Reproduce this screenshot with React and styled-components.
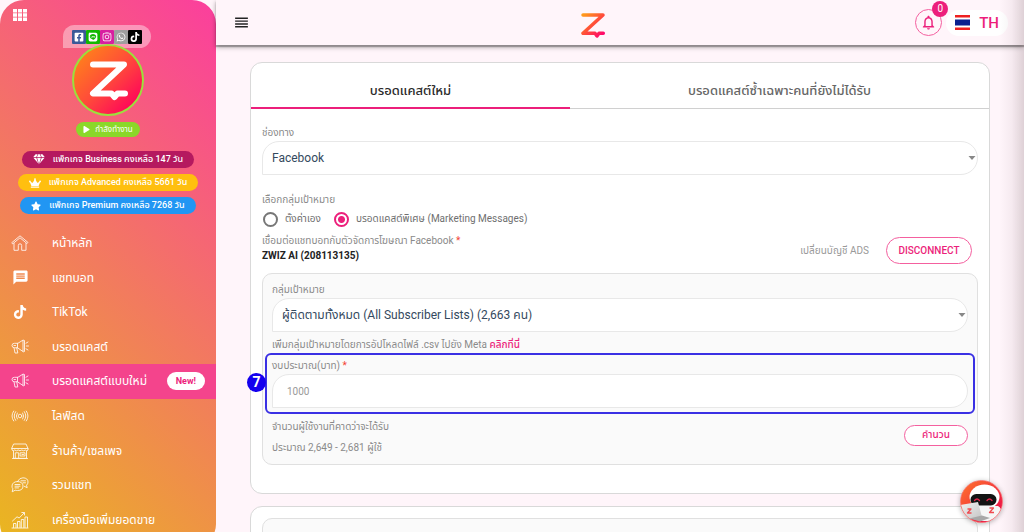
import React from "react";
import styled, { createGlobalStyle, css } from "styled-components";
import { FaFacebookSquare, FaLine, FaInstagram, FaWhatsapp, FaTiktok, FaCrown, FaPlay, FaStar } from "react-icons/fa";
import { MdMessage, MdReorder, MdNotificationsNone } from "react-icons/md";

const PINK = "#ec1f7b";

const GlobalStyle = createGlobalStyle`
  *, *::before, *::after { box-sizing: border-box; }
  body {
    margin: 0;
    background: #fff5fa;
    color: #8a8a8a;
    font-family: Roboto, "Noto Sans Thai", "Noto Sans", sans-serif;
    font-size: 10px;
    line-height: 16px;
  }
  button, input, select { font: inherit; margin: 0; }
  button { cursor: pointer; padding: 0; border: 0; background: none; }
  svg { display: block; flex: none; }
`;

const Shell = styled.div`
  display: flex;
  align-items: flex-start;
  height: 100vh;
  overflow: hidden;
`;

/* ---------- sidebar ---------- */
const Sidebar = styled.aside`
  flex: 0 0 216px;
  min-height: calc(100vh + 16px);
  padding-top: 9px;
  border-radius: 24px;
  color: #fff;
  background: linear-gradient(45deg, #e9b81e, #fb3e9e);
`;

const AppsButton = styled.button`
  display: block;
  margin-left: 13px;
  color: #fff;
`;

const Profile = styled.div`
  display: flex;
  flex-direction: column;
  align-items: center;
  padding-top: 4px;
`;

const Socials = styled.div`
  display: flex;
  margin-right: 2px;
  padding: 5px 9px 4px;
  border-radius: 12px 12px 12px 0;
  background: rgba(255, 255, 255, 0.4);
`;

const Social = styled.a`
  display: grid;
  place-items: center;
  width: 14px;
  height: 14px;
  border-radius: 1px;
  color: #fff;
  font-size: 10px;
  background: ${(p) => p.$color};
`;

const Avatar = styled.div`
  width: 72px;
  height: 72px;
  margin-top: -4px;
  border: 2px solid #9be03c;
  border-radius: 50%;
  overflow: hidden;
  background: linear-gradient(135deg, #ff7a1f 15%, #ff4b3a 50%, #ff0a58 85%);
`;

const Status = styled.button`
  display: flex;
  align-items: center;
  gap: 5px;
  height: 15px;
  margin-top: 6px;
  padding: 0 7px;
  border-radius: 8px;
  background: #8bd829;
  color: #fff;
  font-size: 8px;
  line-height: 15px;
`;

const Packages = styled.div`
  display: flex;
  flex-direction: column;
  align-items: center;
  gap: 6px;
  margin-top: 14px;
`;

const Package = styled.div`
  display: flex;
  align-items: center;
  gap: 8px;
  height: 17px;
  padding: 0 11px;
  border-radius: 9px;
  background: ${(p) => p.$color};
  font-size: 9px;
  font-weight: 500;
  line-height: 17px;
  white-space: nowrap;
`;

const Nav = styled.nav`
  display: grid;
  grid-auto-rows: 1fr;
  min-height: 311px;
  margin-top: 12px;
`;

const NavLink = styled.a`
  display: flex;
  align-items: center;
  padding: 0 11px;
  color: #fff;
  font-size: 12px;
  line-height: 20px;
  text-decoration: none;
  white-space: nowrap;
  ${(p) => p.$active && css`background: #f4448c;`}
`;

const NavIcon = styled.span`
  display: grid;
  place-items: center;
  width: 18px;
  margin-right: 23px;
`;

const NewTag = styled.span`
  margin-left: auto;
  padding: 0 9px;
  border-radius: 9px;
  background: #fff;
  color: ${PINK};
  font-size: 9px;
  font-weight: 700;
  line-height: 18px;
`;

/* ---------- header ---------- */
const Main = styled.div`
  flex: 1;
  min-width: 0;
`;

const Header = styled.header`
  position: relative;
  display: flex;
  align-items: center;
  justify-content: space-between;
  height: 45px;
  padding: 0 16px 0 17px;
  background: #fff5fa;
  box-shadow: 0 2px 1px rgba(0, 0, 0, 0.25), 0 2px 5px rgba(0, 0, 0, 0.35);
`;

const MenuButton = styled.button`
  width: 38px;
  color: #222;
`;

const HeaderTools = styled.div`
  display: flex;
  align-items: center;
  gap: 4px;
`;

const Bell = styled.button`
  position: relative;
  display: grid;
  place-items: center;
  width: 27px;
  height: 27px;
  border: 1px solid #f4609f;
  border-radius: 50%;
  color: ${PINK};
`;

const Badge = styled.span`
  position: absolute;
  top: -9px;
  right: -7px;
  width: 16px;
  height: 16px;
  border-radius: 50%;
  background: ${PINK};
  color: #fff;
  line-height: 16px;
`;

const Language = styled.button`
  display: flex;
  align-items: center;
  gap: 9px;
  height: 26px;
  padding: 0 9px;
  border-radius: 13px;
  background: #fff;
  color: ${PINK};
  font-size: 15px;
  font-weight: 500;
`;

/* ---------- content ---------- */
const Content = styled.main`
  display: grid;
  gap: 12px;
  padding: 17px 34px 17px;
`;

const Card = styled.section`
  border: 1px solid #d9d9d9;
  border-radius: 12px;
  background: #fff;
`;

const Tabs = styled.div`
  display: grid;
  grid-template-columns: 319px 1fr;
  height: 46px;
  border-bottom: 1px solid #d0d0d0;
`;

const Tab = styled.button`
  padding-top: 11px;
  margin-bottom: -1px;
  color: ${(p) => (p.$active ? "#2b2b2b" : "#666")};
  font-size: 13px;
  font-weight: 500;
  border-bottom: 2px solid ${(p) => (p.$active ? PINK : "transparent")};
`;

const CardBody = styled.div`
  padding: ${(p) => (p.$compact ? "11px" : "16px 11px 28px")};
`;

const Label = styled.label`
  display: block;
  height: 16px;
  white-space: nowrap;
`;

const Required = styled.span`
  color: #f44336;
`;

const SelectBox = styled.span`
  display: grid;
  align-items: center;
  & > * { grid-area: 1 / 1; }
  & > svg { justify-self: end; margin-right: 2px; pointer-events: none; }
`;

const fieldStyle = css`
  display: block;
  width: 100%;
  height: 34px;
  border: 1px solid #e8e8e8;
  border-radius: 17px 17px 17px 0;
  outline: 0;
  background: #fff;
  font-size: 12px;
`;

const Select = styled.select`
  ${fieldStyle}
  appearance: none;
  padding: 0 24px 0 9px;
  color: #34495e;
`;

const Input = styled.input`
  ${fieldStyle}
  padding: 0 14px;
  font-size: 10px;
  &::placeholder { color: #999; }
`;

const Group = styled.fieldset`
  min-width: 0;
  margin: 17px 0 0;
  padding: 0;
  border: 0;
  & > legend { padding: 0; }
`;

const Radios = styled.div`
  display: flex;
  gap: 12px;
  margin-top: 3px;
`;

const RadioLabel = styled.label`
  display: flex;
  align-items: center;
  gap: 6px;
  color: #6f6f6f;
  white-space: nowrap;
`;

const Radio = styled.input`
  appearance: none;
  width: 15px;
  height: 15px;
  margin: 0 1px;
  border: 2px solid #777;
  border-radius: 50%;
  &:checked {
    border-color: ${PINK};
    background: radial-gradient(circle, ${PINK} 3px, transparent 4px);
  }
`;

const Account = styled.div`
  display: flex;
  align-items: center;
  justify-content: space-between;
  margin: 5px 0 9px;
  padding-right: 6px;
`;

const AccountName = styled.div`
  color: #222;
  font-weight: 700;
  line-height: 14px;
`;

const Actions = styled.div`
  display: flex;
  align-items: center;
  gap: 17px;
  padding-top: 5px;
`;

const PlainButton = styled.button`
  color: #999;
`;

const OutlineButton = styled.button`
  height: ${(p) => (p.$small ? "21px" : "27px")};
  min-width: ${(p) => (p.$small ? "64px" : "86px")};
  border: 1px solid #f4609f;
  border-radius: 14px;
  color: ${PINK};
  background: #fff;
  font-weight: 500;
`;

const Panel = styled.div`
  padding: 8px 9px;
  border: 1px solid #e0e0e0;
  border-radius: 10px;
  background: #fafafa;
`;

const Hint = styled.p`
  margin: 5px 0 0;
  white-space: nowrap;
  & a { color: ${PINK}; font-weight: 500; text-decoration: none; }
`;

const Highlight = styled.div`
  position: relative;
  margin: 0 -7px;
  padding: 3px 5px 4px;
  border: 2px solid #3a30e4;
  border-radius: 6px;
`;

const Step = styled.span`
  position: absolute;
  left: -20px;
  top: 18px;
  width: 19px;
  height: 19px;
  border-radius: 50%;
  background: #1400ee;
  color: #fff;
  font-size: 14px;
  font-weight: 700;
  line-height: 19px;
  text-align: center;
`;

const Estimate = styled.div`
  display: flex;
  align-items: center;
  justify-content: space-between;
`;

const EdgeShade = styled.div`
  position: fixed;
  top: 0;
  right: 0;
  bottom: 0;
  width: 24px;
  pointer-events: none;
  background: linear-gradient(to right, rgba(60, 30, 40, 0), rgba(60, 30, 40, 0.05) 50%, rgba(60, 30, 40, 0.17));
`;

const ChatButton = styled.button`
  position: fixed;
  right: 21px;
  bottom: 9px;
  border-radius: 50%;
  box-shadow: 0 1px 5px rgba(0, 0, 0, 0.3);
`;

/* ---------- drawings ---------- */
const BrandMark = () => (
  <svg width="26" height="30" viewBox="0 0 26 30" aria-label="ZWIZ">
    <defs>
      <linearGradient id="brand" x1="0" y1="0" x2="1" y2="1">
        <stop offset="0" stopColor="#ff9a1a" />
        <stop offset="0.5" stopColor="#ff4b3a" />
        <stop offset="1" stopColor="#ff0070" />
      </linearGradient>
    </defs>
    <path d="M3 7 H23 L3 25.300 H15 L17 28 L19 25.300 H23.300" fill="none" stroke="url(#brand)" strokeWidth="3.500" strokeLinecap="round" strokeLinejoin="round" />
  </svg>
);

const AvatarMark = () => (
  <svg width="68" height="68" viewBox="0 0 68 68">
    <path d="M19 18.500 H50 L19 47.500 H37.500 L40.500 51 L43.500 47.500 H51" fill="none" stroke="#fff" strokeWidth="6" strokeLinecap="round" strokeLinejoin="round" />
  </svg>
);

const AppsIcon = () => (
  <svg width="14" height="12" viewBox="0 0 14 12" fill="#fff">
    {[0, 5, 10].map((x) => [0, 4.25, 8.5].map((y) => <rect key={x + "-" + y} x={x} y={y} width="4" height="3.5" />))}
  </svg>
);

const DiamondIcon = () => (
  <svg width="12" height="11" viewBox="0 0 12 11" fill="#fff">
    <path d="M2.600 0.300H4.600L3.300 3H0.300zM5.200 0.300H6.800L8 3H4zM7.400 0.300H9.400L11.700 3H8.700zM0.400 3.700H3.300L5.300 9.600zM4.100 3.700H7.900L6 10.300zM8.700 3.700H11.600L6.700 9.600z" />
  </svg>
);

const Flag = () => (
  <svg width="15" height="15" viewBox="0 0 15 15">
    <rect width="15" height="15" fill="#fff" />
    <rect width="15" height="2.5" fill="#ee2020" />
    <rect y="4.5" width="15" height="6" fill="#0a1f8f" />
    <rect y="12.5" width="15" height="2.5" fill="#ee2020" />
  </svg>
);

const Caret = () => (
  <svg width="8" height="4" viewBox="0 0 8 4"><path d="M0.500 0H7.500L4 4z" fill="#888" /></svg>
);

const Line = ({ children }) => (
  <svg width="18" height="18" viewBox="0 0 18 18" fill="none" stroke="#fff" strokeWidth="0.9" strokeLinecap="round" strokeLinejoin="round" opacity="0.9">
    {children}
  </svg>
);

const HomeIcon = () => (
  <Line><path d="M1 8.500L9 1.800L17 8.500L16 9.600L9 3.800L2 9.600zM3 9.500V16.300H7.300V11.500Q7.300 9.800 9 9.800T10.700 11.500V16.300H15V9.500" /></Line>
);
const MegaphoneIcon = () => (
  <Line><path d="M6.500 5.300H3.500Q1 5.300 1 7.500T3.500 9.800H6.500L12 13.500V2.500zM6.500 5.300V9.800M3 9.800L4 15H6.800L5.700 9.800M12 2.500Q13 1.500 13.500 2.500V13.500Q13 14.500 12 13.500M3 7.500H4.500M15 5.200L17 4M15.300 8H17.500M15 10.800L17 12" /></Line>
);
const LiveIcon = () => (
  <Line>
    <circle cx="9" cy="9" r="1.8" />
    <path d="M6.300 6Q4.200 9 6.300 12M11.700 6Q13.800 9 11.700 12M4.700 4.600Q1.600 9 4.700 13.400M13.300 4.600Q16.400 9 13.300 13.400M2.700 4Q-0.800 9 2.700 14M15.300 4Q18.800 9 15.300 14" />
  </Line>
);
const ShopIcon = () => (
  <Line><path d="M3 2H15L17 6.500H1zM1 6.500V8Q2 9.500 3.700 8Q5.400 9.500 7.200 8Q9 9.500 10.800 8Q12.600 9.500 14.300 8Q16 9.500 17 8V6.500M2.500 9.200V16.300H15.500V9.200M4.300 16V10.800H7.700V16M9.500 10.800H14V14H9.500zM1.500 16.500H16.500M11 12.500H12.500" /></Line>
);
const ChatsIcon = () => (
  <Line>
    <path d="M7 4.800Q8.500 1.800 12 1.800Q17 2 17 6Q17 8 15.500 9.200L16.200 11.700L13.300 10.300M10 4.800H14.500M12 6.800H14.500" />
    <path d="M6.500 5.500Q12 5.700 12 10Q12 14.500 6.500 14.500Q5 14.500 4.200 14.200L1.200 15.800L1.900 12.800Q0.800 11.500 1 10Q1.300 5.700 6.500 5.500zM4 8.500H9M4 10.200H9M4 11.900H7.500" />
  </Line>
);
const ChartIcon = () => (
  <Line><path d="M1 17H17M2.500 16.500V12.500H5V16.500M6.500 16.500V10.500H9V16.500M10.300 16.500V8.500H12.800V16.500M14 16.500V6H16.500V16.500M1.500 10L6 5.800L8.200 7L13.200 1.800M10.800 1.500H13.500V4" /></Line>
);

const Robot = () => (
  <svg width="43" height="43" viewBox="0 0 43 43">
    <defs>
      <linearGradient id="ring" x1="0" y1="0" x2="1" y2="1">
        <stop offset="0" stopColor="#ff7a2a" />
        <stop offset="0.5" stopColor="#f53a3a" />
        <stop offset="1" stopColor="#e8004f" />
      </linearGradient>
      <linearGradient id="lid" x1="0" y1="0" x2="1" y2="1">
        <stop offset="0" stopColor="#f2f2f2" />
        <stop offset="1" stopColor="#c4c4c4" />
      </linearGradient>
      <clipPath id="disc"><circle cx="21.5" cy="21.5" r="21" /></clipPath>
    </defs>
    <g clipPath="url(#disc)">
      <rect width="43" height="43" fill="url(#ring)" />
      <ellipse cx="24.500" cy="17" rx="15" ry="12.500" fill="#fff" />
      <path d="M18 26H38Q42 28 41 33L36 41H20z" fill="#f6f6f6" />
      <rect x="10.500" y="14" width="26" height="11.500" rx="5.700" fill="#141414" />
      <path d="M14.500 20.500Q17 17.500 19.500 20.500M27 20.500Q29.500 17.500 32 20.500" fill="none" stroke="#e5254b" strokeWidth="1.300" strokeLinecap="round" />
      <path d="M0 25L18 22L22 37L8 40L0 35z" fill="url(#lid)" />
      <path d="M9 38.500L22 35.500L30 38L20 41.500z" fill="#a8a8a8" />
      <path d="M7.500 29H11L7.500 33H11.500M29.500 28H33.500L29.500 32.500H34" fill="none" stroke="#f04a50" strokeWidth="1.300" strokeLinejoin="round" />
    </g>
    <circle cx="21.5" cy="21.5" r="21" fill="none" stroke="#f07070" strokeWidth="0.8" />
  </svg>
);

const socials = [
  ["Facebook", "#3b5998", FaFacebookSquare],
  ["LINE", "#12b800", FaLine],
  ["Instagram", "#d81fa0", FaInstagram],
  ["WhatsApp", "#9e9e9e", FaWhatsapp],
  ["TikTok", "#000", FaTiktok],
];

const packages = [
  ["แพ็กเกจ Business คงเหลือ 147 วัน", "#b5195f", <DiamondIcon />],
  ["แพ็กเกจ Advanced คงเหลือ 5661 วัน", "#ffbf0f", <FaCrown size={12} />],
  ["แพ็กเกจ Premium คงเหลือ 7268 วัน", "#2196f3", <FaStar size={10} />],
];

const navigation = [
  ["หน้าหลัก", <HomeIcon />],
  ["แชทบอท", <MdMessage size={17} />],
  ["TikTok", <FaTiktok size={14} />],
  ["บรอดแคสต์", <MegaphoneIcon />],
  ["บรอดแคสต์แบบใหม่", <MegaphoneIcon />, true],
  ["ไลฟ์สด", <LiveIcon />],
  ["ร้านค้า/เซลเพจ", <ShopIcon />],
  ["รวมแชท", <ChatsIcon />],
  ["เครื่องมือเพิ่มยอดขาย", <ChartIcon />],
];

export default function App() {
  return (
    <Shell>
      <GlobalStyle />
      <Sidebar>
        <AppsButton aria-label="Apps"><AppsIcon /></AppsButton>
        <Profile>
          <Socials>
            {socials.map(([name, color, Icon]) => (
              <Social key={name} href="#" aria-label={name} $color={color}><Icon /></Social>
            ))}
          </Socials>
          <Avatar><AvatarMark /></Avatar>
          <Status><FaPlay size={7} />กำลังทำงาน</Status>
        </Profile>
        <Packages>
          {packages.map(([text, color, icon]) => (
            <Package key={text} $color={color}>{icon}{text}</Package>
          ))}
        </Packages>
        <Nav>
          {navigation.map(([text, icon, active]) => (
            <NavLink key={text} href="#" $active={active}>
              <NavIcon>{icon}</NavIcon>
              {text}
              {active && <NewTag>New!</NewTag>}
            </NavLink>
          ))}
        </Nav>
      </Sidebar>

      <Main>
        <Header>
          <MenuButton aria-label="Menu"><MdReorder size={17} /></MenuButton>
          <BrandMark />
          <HeaderTools>
            <Bell aria-label="Notifications"><MdNotificationsNone size={17} /><Badge>0</Badge></Bell>
            <Language><Flag />TH</Language>
          </HeaderTools>
        </Header>

        <Content>
          <Card>
            <Tabs role="tablist">
              <Tab role="tab" aria-selected="true" $active>บรอดแคสต์ใหม่</Tab>
              <Tab role="tab" aria-selected="false">บรอดแคสต์ซ้ำเฉพาะคนที่ยังไม่ได้รับ</Tab>
            </Tabs>
            <CardBody>
              <Label htmlFor="channel">ช่องทาง</Label>
              <SelectBox>
                <Select id="channel"><option>Facebook</option></Select>
                <Caret />
              </SelectBox>

              <Group>
                <legend>เลือกกลุ่มเป้าหมาย</legend>
                <Radios>
                  <RadioLabel><Radio type="radio" name="target" />ตั้งค่าเอง</RadioLabel>
                  <RadioLabel><Radio type="radio" name="target" defaultChecked />บรอดแคสต์พิเศษ (Marketing Messages)</RadioLabel>
                </Radios>
              </Group>

              <Account>
                <div>
                  <div>เชื่อมต่อแชทบอทกับตัวจัดการโฆษณา Facebook <Required>*</Required></div>
                  <AccountName>ZWIZ AI (208113135)</AccountName>
                </div>
                <Actions>
                  <PlainButton>เปลี่ยนบัญชี ADS</PlainButton>
                  <OutlineButton>DISCONNECT</OutlineButton>
                </Actions>
              </Account>

              <Panel>
                <Label htmlFor="audience">กลุ่มเป้าหมาย</Label>
                <SelectBox>
                  <Select id="audience"><option>ผู้ติดตามทั้งหมด (All Subscriber Lists) (2,663 คน)</option></Select>
                  <Caret />
                </SelectBox>
                <Hint>เพิ่มกลุ่มเป้าหมายโดยการอัปโหลดไฟล์ .csv ไปยัง Meta <a href="#">คลิกที่นี่</a></Hint>
                <Highlight>
                  <Step>7</Step>
                  <Label htmlFor="budget">งบประมาณ(บาท) <Required>*</Required></Label>
                  <Input id="budget" placeholder="1000" />
                </Highlight>
                <Estimate>
                  <div>
                    <Hint>จำนวนผู้ใช้งานที่คาดว่าจะได้รับ</Hint>
                    <Hint>ประมาณ 2,649 - 2,681 ผู้ใช้</Hint>
                  </div>
                  <OutlineButton $small>คำนวน</OutlineButton>
                </Estimate>
              </Panel>
            </CardBody>
          </Card>
          <Card>
            <CardBody $compact>
              <Panel>
                <Label as="div" />
              </Panel>
            </CardBody>
          </Card>
        </Content>
      </Main>
      <EdgeShade />
      <ChatButton aria-label="Chat"><Robot /></ChatButton>
    </Shell>
  );
}
